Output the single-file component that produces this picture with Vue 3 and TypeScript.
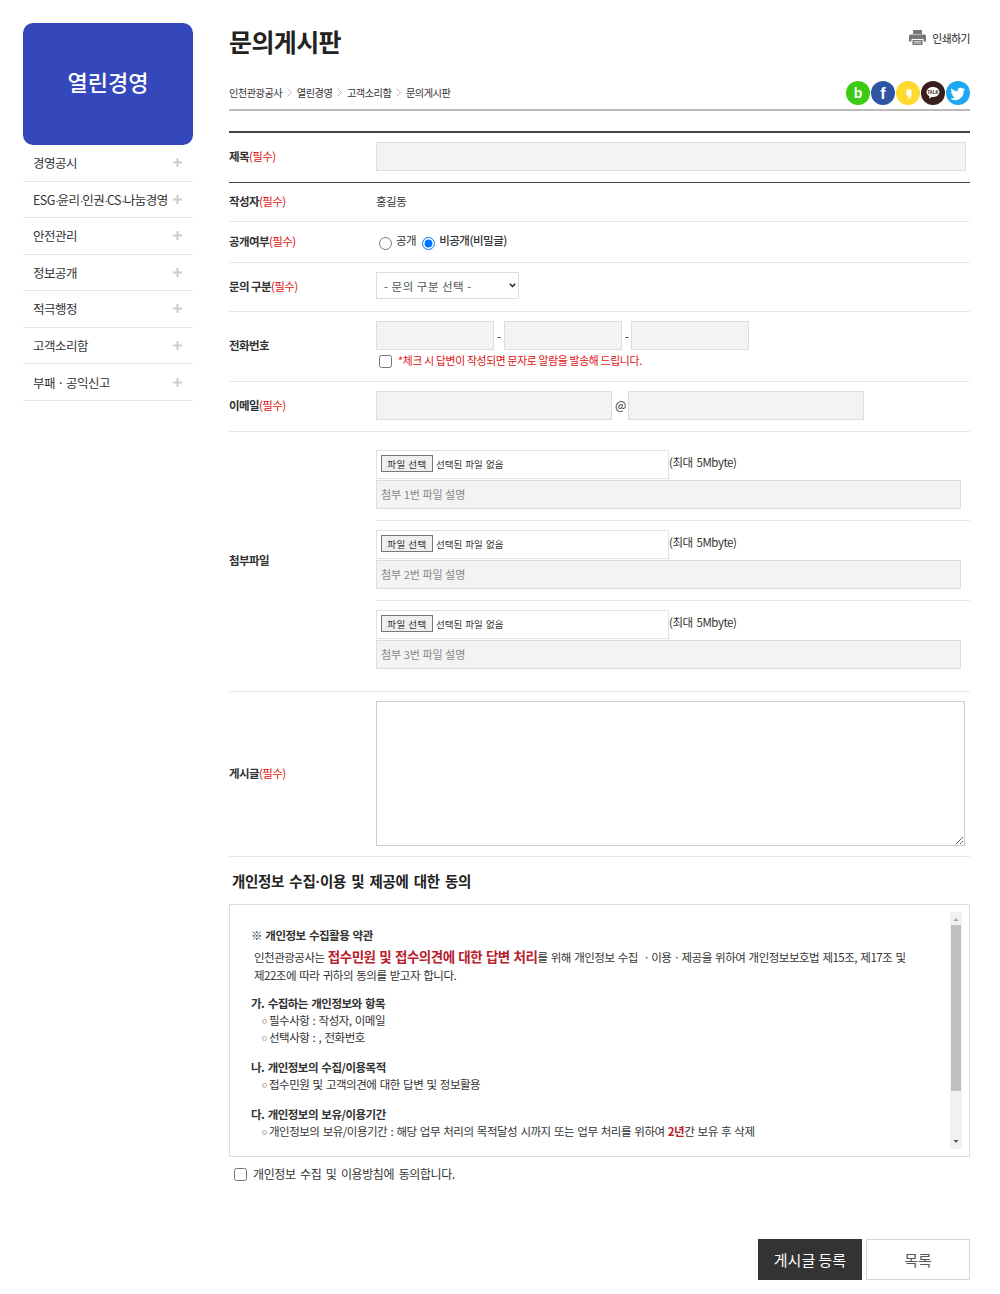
<script setup lang="ts">
const menu = ['경영공시', 'ESG·윤리·인권·CS·나눔경영', '안전관리', '정보공개', '적극행정', '고객소리함', '부패 · 공익신고']
const crumbs = ['인천관광공사', '열린경영', '고객소리함', '문의게시판']
const files = [1, 2, 3]

// the mid dots are much narrower than the CJK font's own
const pieces = (label: string) => (label.includes(' · ') ? [label] : label.split('·'))
</script>

<template>
  <div class="page">
    <aside class="side">
      <h2 class="side-title">열린경영</h2>
      <ul class="side-menu">
        <li v-for="m in menu" :key="m">
          <span class="side-label">
            <template v-for="(p, i) in pieces(m)" :key="p"><i v-if="i" class="dot">·</i>{{ p }}</template>
          </span>
          <svg class="plus" width="9" height="9" viewBox="0 0 9 9"><path d="M3.5 0h2v3.5H9v2H5.5V9h-2V5.5H0v-2h3.5z" fill="#ccc" /></svg>
        </li>
      </ul>
    </aside>

    <main class="main">
      <div class="head">
        <h1>문의게시판</h1>
        <a class="print">
          <svg width="17" height="15" viewBox="0 0 17 15"><path d="M4 0h9v4H4zM1.5 4.5h14A1.5 1.5 0 0 1 17 6v5.5h-2.500V9h-12v2.500H0V6a1.5 1.5 0 0 1 1.5-1.5zM3.500 10h10v5h-10z" fill="#777" /><path d="M5 11.500h7M5 13.200h7" stroke="#fff" stroke-width=".7" /></svg>
          인쇄하기
        </a>
      </div>

      <div class="crumb-bar">
        <div class="crumbs">
          <template v-for="(c, i) in crumbs" :key="c">
            <span>{{ c }}</span>
            <svg v-if="i < crumbs.length - 1" width="5" height="9" viewBox="0 0 5 9"><path d="M.5.5l4 4-4 4" fill="none" stroke="#bbb" /></svg>
          </template>
        </div>
        <div class="sns">
          <svg width="24" height="24" viewBox="0 0 24 24"><circle cx="12" cy="12" r="12" fill="#3ccb14" /><text x="12" y="17" text-anchor="middle" class="sns-letter" font-size="14">b</text></svg>
          <svg width="24" height="24" viewBox="0 0 24 24"><circle cx="12" cy="12" r="12" fill="#2d55a4" /><text x="12" y="18" text-anchor="middle" class="sns-letter" font-size="16">f</text></svg>
          <svg width="24" height="24" viewBox="0 0 24 24"><circle cx="12" cy="12" r="12" fill="#ffd92e" /><path d="M10.500 8.500h5v5c0 2.200-1.200 3.700-3.500 4.500l-.7-1.100c1-.5 1.600-1.200 1.700-2.200h-2.500z" fill="#fff" /></svg>
          <svg width="24" height="24" viewBox="0 0 24 24"><circle cx="12" cy="12" r="12" fill="#3a1d1d" /><path d="M12 6c-3.600 0-6.500 2.200-6.500 5 0 1.800 1.200 3.400 3 4.300l-.6 2.400 2.800-1.800c.4.100.9.100 1.300.1 3.600 0 6.500-2.200 6.500-5S15.600 6 12 6z" fill="#fff" /><text x="12" y="12.800" text-anchor="middle" class="sns-talk" font-size="4.500">TALK</text></svg>
          <svg width="24" height="24" viewBox="0 0 24 24"><circle cx="12" cy="12" r="12" fill="#1da8f2" /><path d="M19 8.100c-.5.200-1.100.4-1.700.5.600-.4 1-.9 1.300-1.600-.6.300-1.200.6-1.900.7a3 3 0 0 0-5.100 2.700c-2.500-.1-4.700-1.300-6.100-3.100-.8 1.400-.4 3.100.9 4-.5 0-.9-.1-1.300-.4 0 1.400 1 2.700 2.400 3-.4.100-.9.100-1.300 0 .4 1.200 1.500 2 2.800 2.100A6 6 0 0 1 4.500 17.700 8.500 8.500 0 0 0 17.600 10c.6-.5 1-1.100 1.400-1.900z" fill="#fff" /></svg>
        </div>
      </div>

      <form class="form" @submit.prevent>
        <div class="row r-title">
          <label class="lb">제목<em>(필수)</em></label>
          <div class="val"><input class="ipt w-full" type="text" /></div>
        </div>
        <div class="row r-author">
          <label class="lb">작성자<em>(필수)</em></label>
          <div class="val author">홍길동</div>
        </div>
        <div class="row r-public">
          <label class="lb">공개여부<em>(필수)</em></label>
          <div class="val radios">
            <input type="radio" name="pub" />
            <span>공개</span>
            <input type="radio" name="pub" checked />
            <span class="strong">비공개(비밀글)</span>
          </div>
        </div>
        <div class="row r-kind">
          <label class="lb">문의 구분<em>(필수)</em></label>
          <div class="val">
            <div class="sel-wrap">
              <select class="sel">
                <option>- 문의 구분 선택 -</option>
              </select>
              <svg class="sel-arrow" width="7" height="5" viewBox="0 0 7 5"><path d="M.8.8l2.700 2.700L6.200.8" fill="none" stroke="#222" stroke-width="1.500" /></svg>
            </div>
          </div>
        </div>
        <div class="row r-phone">
          <label class="lb">전화번호</label>
          <div class="val">
            <div class="phones">
              <input class="ipt w-phone" type="text" />
              <span>-</span>
              <input class="ipt w-phone" type="text" />
              <span>-</span>
              <input class="ipt w-phone" type="text" />
            </div>
            <div class="sms">
              <input type="checkbox" />
              <span>*체크 시 답변이 작성되면 문자로 알람을 발송해 드립니다.</span>
            </div>
          </div>
        </div>
        <div class="row r-email">
          <label class="lb">이메일<em>(필수)</em></label>
          <div class="val emails">
            <input class="ipt w-mail" type="text" />
            <span>@</span>
            <input class="ipt w-mail" type="text" />
          </div>
        </div>
        <div class="row r-file">
          <label class="lb">첨부파일</label>
          <div class="val files">
            <div v-for="n in files" :key="n" class="file-set">
              <div class="file-line">
                <div class="file-box">
                  <button type="button" class="file-btn">파일 선택</button>
                  <span>선택된 파일 없음</span>
                </div>
                <span class="max">(최대 5Mbyte)</span>
              </div>
              <input class="ipt w-desc" type="text" :placeholder="`첨부 ${n}번 파일 설명`" />
            </div>
          </div>
        </div>
        <div class="row r-post">
          <label class="lb">게시글<em>(필수)</em></label>
          <div class="val"><textarea class="txt"></textarea></div>
        </div>
      </form>

      <h3 class="agree-title">개인정보 수집<i class="dot">·</i>이용 및 제공에 대한 동의</h3>
      <div class="terms">
        <div class="terms-body">
          <p class="t-head"><span class="mark">※</span> 개인정보 수집활용 약관</p>
          <p class="t-lead">인천관광공사는 <b class="big">접수민원 및 접수의견에 대한 답변 처리</b>를 위해 개인정보 수집 ㆍ이용ㆍ제공을 위하여 개인정보보호법 제15조, 제17조 및 제22조에 따라 귀하의 동의를 받고자 합니다.</p>
          <p class="t-sec">가. 수집하는 개인정보와 항목</p>
          <p class="t-item">필수사항 : 작성자, 이메일</p>
          <p class="t-item">선택사항 : , 전화번호</p>
          <p class="t-sec">나. 개인정보의 수집/이용목적</p>
          <p class="t-item">접수민원 및 고객의견에 대한 답변 및 정보활용</p>
          <p class="t-sec">다. 개인정보의 보유/이용기간</p>
          <p class="t-item">개인정보의 보유/이용기간 : 해당 업무 처리의 목적달성 시까지 또는 업무 처리를 위하여 <b class="red">2년</b>간 보유 후 삭제</p>
        </div>
        <div class="bar">
          <svg width="12" height="17" viewBox="0 0 12 17"><path d="M6 6l2.500 3h-5z" fill="#aaa" /></svg>
          <div class="thumb-wrap"><div class="thumb"></div></div>
          <svg width="12" height="17" viewBox="0 0 12 17"><path d="M6 11L3.500 8h5z" fill="#555" /></svg>
        </div>
      </div>
      <label class="agree"><input type="checkbox" /> <span>개인정보 수집 및 이용방침에 동의합니다.</span></label>

      <div class="btns">
        <button type="button" class="btn dark">게시글 등록</button>
        <button type="button" class="btn">목록</button>
      </div>
    </main>
  </div>
</template>

<style>
body {
  margin: 0;
  background: #fff;
}
</style>

<style scoped>
.page {
  display: flex;
  width: 1000px;
  height: 1294px;
  box-sizing: border-box;
  padding: 23px 30px 0 23px;
  gap: 36px;
  overflow: hidden;
  font-family: "Noto Sans CJK KR", "Noto Sans", sans-serif;
  font-size: 12px;
  color: #333;
  letter-spacing: -0.5px;
}
.side {
  width: 170px;
  flex: none;
}
.side-title {
  margin: 0;
  height: 122px;
  border-radius: 10px;
  background: #3448bc;
  color: #fff;
  font-size: 22px;
  font-weight: 500;
  letter-spacing: 0;
  text-align: center;
  line-height: 116px;
}
.side-menu {
  list-style: none;
  margin: 0;
  padding: 0;
}
.side-menu li {
  display: flex;
  align-items: center;
  justify-content: space-between;
  height: 35.5px;
  padding: 0 11px 0 10px;
  border-bottom: 1px solid #e6e6e6;
  font-size: 12.5px;
  color: #333;
}
.side-menu li:last-child {
  height: 36px;
}
.side-label {
  white-space: nowrap;
}
.dot {
  font-family: "Liberation Sans", sans-serif;
  font-style: normal;
}
.side-label .dot {
  letter-spacing: -1.5px;
}
.plus {
  flex: none;
}
.main {
  flex: 1;
  min-width: 0;
}
.head {
  display: flex;
  justify-content: space-between;
  height: 52px;
}
.head h1 {
  margin: 0;
  font-size: 25px;
  font-weight: 700;
  line-height: 36px;
  color: #222;
  letter-spacing: -0.6px;
}
.print {
  display: flex;
  align-items: center;
  gap: 6px;
  height: 29px;
  font-size: 10.8px;
  color: #222;
}
.crumb-bar {
  display: flex;
  justify-content: space-between;
  align-items: center;
  height: 34px;
  border-bottom: 2px solid #bbb;
}
.crumbs {
  display: flex;
  align-items: center;
  gap: 4.8px;
  font-size: 10.2px;
  color: #333;
}
.sns {
  display: flex;
  gap: 1px;
  padding-top: 1px;
}
.sns-letter {
  font-family: "Liberation Sans", sans-serif;
  font-weight: 700;
  fill: #fff;
  letter-spacing: 0;
}
.sns-talk {
  font-family: "Liberation Sans", sans-serif;
  font-weight: 700;
  fill: #3a1d1d;
  letter-spacing: 0;
}
.form {
  margin-top: 20px;
  border-top: 2px solid #444;
}
.row {
  display: flex;
  align-items: center;
  border-bottom: 1px solid #e8e8e8;
}
.lb {
  width: 147px;
  flex: none;
  padding-bottom: 2px;
  font-weight: 700;
  font-size: 11.5px;
  letter-spacing: -0.6px;
  color: #333;
}
.r-title .lb,
.r-phone .lb,
.r-email .lb,
.r-file .lb {
  padding-bottom: 4px;
}
.lb em {
  font-style: normal;
  font-weight: 400;
  color: #e01010;
}
.val {
  flex: 1;
  min-width: 0;
}
.ipt {
  display: block;
  box-sizing: border-box;
  height: 29px;
  border: 1px solid #ddd;
  background: #f3f3f3;
  padding: 0 4px 2px;
  margin: 0;
  font-family: inherit;
  font-size: 11px;
}
.ipt::placeholder {
  color: #888;
}
.w-full {
  width: 590px;
}
.w-phone {
  width: 118px;
}
.w-mail {
  width: 236px;
}
.w-desc {
  width: 585px;
}
.r-title {
  height: 49px;
  border-bottom-color: #444;
}
.r-title .val {
  margin-bottom: 2px;
}
.r-author {
  height: 38px;
}
.author {
  font-size: 11.5px;
  padding-bottom: 2px;
}
.r-public {
  height: 40px;
}
.radios {
  display: flex;
  align-items: center;
  font-size: 11.5px;
}
.radios span {
  position: relative;
  top: -2px;
}
.radios input {
  width: 13px;
  height: 13px;
  margin: 3px 4px 0 3px;
}
.radios input + span + input {
  margin-left: 6px;
}
.strong {
  font-weight: 500;
}
.r-kind {
  height: 48px;
}
.r-kind .val {
  margin-bottom: 3px;
}
.sel-wrap {
  position: relative;
  width: 143px;
}
.sel {
  display: block;
  appearance: none;
  box-sizing: border-box;
  width: 143px;
  height: 27px;
  border: 1px solid #ddd;
  border-radius: 0;
  background: #fff;
  padding: 0 7px;
  font-family: inherit;
  font-size: 11.5px;
  letter-spacing: 0.5px;
  color: #555;
}
.sel-arrow {
  position: absolute;
  right: 3px;
  top: 11px;
  pointer-events: none;
}
.r-phone {
  height: 69px;
}
.r-phone .val {
  margin-bottom: 4px;
}
.phones {
  display: flex;
  align-items: center;
  gap: 3px;
}
.sms {
  display: flex;
  align-items: center;
  gap: 6px;
  margin-top: 3px;
  padding-left: 3px;
  font-size: 10.8px;
  color: #e01010;
  letter-spacing: -0.3px;
}
.sms input {
  width: 13px;
  height: 13px;
  margin: 2px 0 0;
}
.sms span {
  position: relative;
  top: -1px;
}
.r-email {
  height: 49px;
}
.r-email .val {
  margin-bottom: 2px;
}
.emails {
  display: flex;
  align-items: center;
  gap: 3px;
}
.emails span {
  font-size: 12px;
  position: relative;
  top: -1px;
  margin-right: -1px;
}
.r-file {
  height: 259px;
}
.files {
  align-self: stretch;
  display: flex;
  flex-direction: column;
  justify-content: flex-start;
  padding-top: 18px;
}
.file-set {
  padding-bottom: 11px;
}
.file-set + .file-set {
  border-top: 1px solid #e8e8e8;
  padding-top: 9px;
}
.file-line {
  display: flex;
  align-items: flex-start;
  margin-bottom: 1px;
  height: 29px;
}
.file-box {
  box-sizing: border-box;
  display: flex;
  align-items: center;
  gap: 3px;
  width: 293px;
  height: 29px;
  border: 1px solid #e2e2e2;
  padding: 0 0 2px 4px;
  font-size: 9.5px;
  letter-spacing: 0;
  word-spacing: 1px;
}
.file-btn {
  box-sizing: border-box;
  width: 52px;
  height: 17px;
  padding: 0;
  border: 1px solid #777;
  border-radius: 0;
  background: #efefef;
  font-family: inherit;
  font-size: 9.5px;
  letter-spacing: 0.5px;
  color: #333;
}
.max {
  font-size: 11.5px;
  line-height: 24px;
  word-spacing: 2px;
}
.r-post {
  height: 164px;
}
.r-post .val {
  margin-bottom: 2px;
}
.txt {
  display: block;
  box-sizing: border-box;
  width: 589px;
  height: 145px;
  border: 1px solid #ccc;
  background: #fff;
  font-family: inherit;
}
.agree-title {
  margin: 13px 0 0 3px;
  font-size: 14.5px;
  line-height: 22px;
  font-weight: 700;
  color: #222;
  letter-spacing: -0.3px;
  word-spacing: 2.2px;
}
.terms {
  display: flex;
  box-sizing: border-box;
  height: 253px;
  margin-top: 11px;
  border: 1px solid #ddd;
  padding: 7px 7px 7px 21px;
  gap: 40px;
  overflow: hidden;
}
.terms-body {
  flex: 1;
  min-width: 0;
  padding-top: 14px;
  font-size: 11.5px;
  word-spacing: 1.2px;
}
.terms-body p {
  margin: 0;
}
.terms-body .t-head {
  font-weight: 700;
  line-height: 18px;
}
.mark {
  font-weight: 400;
}
.terms-body .t-lead {
  padding-left: 3px;
  margin-top: 3px;
  line-height: 18px;
}
.big {
  font-size: 13.5px;
  font-weight: 700;
  color: #b8202c;
}
.terms-body .t-sec {
  margin-top: 13px;
  margin-bottom: 1px;
  line-height: 16px;
  font-weight: 700;
}
.terms-body .t-lead + .t-sec {
  margin-top: 11px;
}
.t-item {
  line-height: 17px;
  padding-left: 18px;
  position: relative;
}
.t-item::before {
  content: "";
  position: absolute;
  left: 11px;
  top: 7px;
  width: 3px;
  height: 3px;
  border: 1px solid #aaa;
  border-radius: 50%;
}
.red {
  color: #b8202c;
  font-weight: 700;
}
.bar {
  flex: none;
  display: flex;
  flex-direction: column;
  align-items: center;
  width: 12px;
  background: #f1f1f1;
}
.bar svg {
  flex: none;
}
.thumb-wrap {
  flex: 1;
  width: 100%;
}
.thumb {
  width: 10px;
  height: 166px;
  margin: -4px auto 0;
  background: #c1c1c1;
}
.agree {
  display: flex;
  align-items: center;
  gap: 6px;
  margin: 8px 0 0 5px;
  font-size: 12px;
  letter-spacing: -0.4px;
  word-spacing: 2.2px;
}
.agree input {
  width: 13px;
  height: 13px;
  margin: 2px 0 0;
}
.btns {
  display: flex;
  justify-content: flex-end;
  gap: 4px;
  margin-top: 57px;
}
.btn {
  box-sizing: border-box;
  width: 104px;
  height: 41px;
  border: 1px solid #d5d5d5;
  background: #fff;
  font-family: inherit;
  font-size: 15px;
  color: #555;
  padding: 0;
}
.btn.dark {
  background: #333;
  border-color: #333;
  color: #fff;
}
</style>
